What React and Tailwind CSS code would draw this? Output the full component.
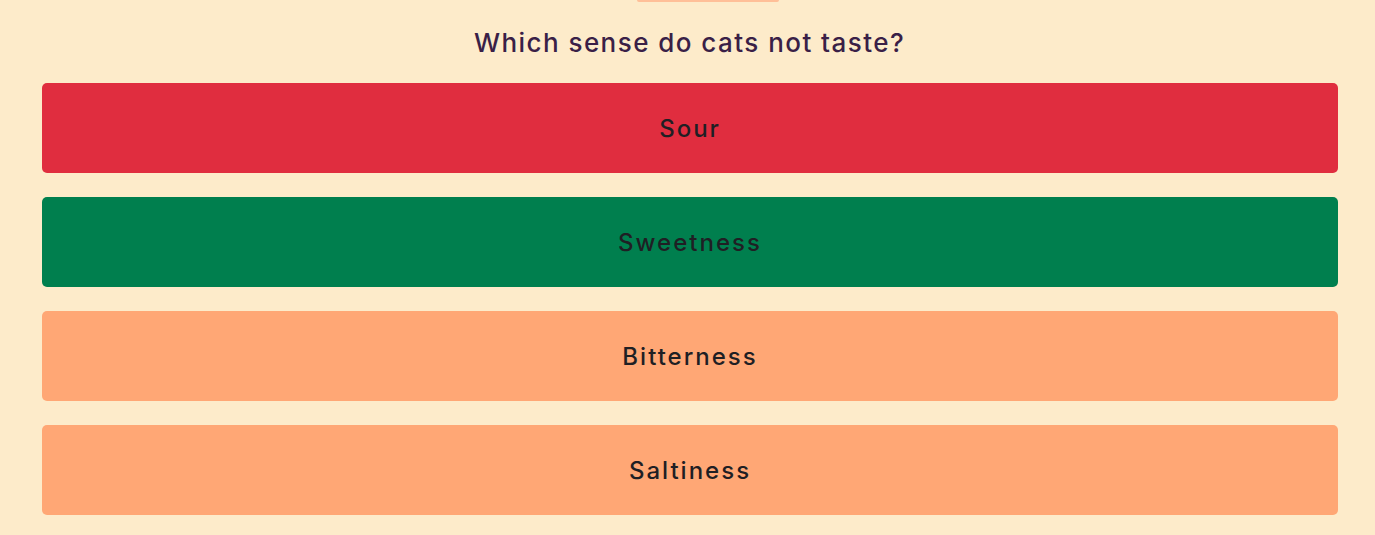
export default function App() {
  const opts = [
    { t: "Sour", c: "bg-[#e02d3f]" },
    { t: "Sweetness", c: "bg-[#007f4e]" },
    { t: "Bitterness", c: "bg-[#ffa775]" },
    { t: "Saltiness", c: "bg-[#ffa775]" },
  ];
  return (
    <div className="min-h-[535px] bg-[#fdebca] flex flex-col" style={{ fontFamily: 'Inter, "Noto Sans", sans-serif' }}>
      <div className="h-[2px] flex justify-center">
        <div className="w-[142px] h-[2px] ml-[40px] rounded-b-full bg-[#ffbf98]" />
      </div>
      <h1 className="text-center text-[26px] leading-[36px] font-medium text-[#3a1f47] mt-[23px] pl-[4px] tracking-[1.45px]">
        Which sense do cats not taste?
      </h1>
      <div className="flex flex-col gap-[24px] pl-[42px] pr-[37px] mt-[22px] pb-[20px]">
        {opts.map((o) => (
          <div
            key={o.t}
            className={`${o.c} h-[90px] rounded-[5px] flex items-center justify-center pt-[2px] text-[24px] font-medium text-[#1f1f24] tracking-[2px]`}
          >
            {o.t}
          </div>
        ))}
      </div>
    </div>
  );
}
